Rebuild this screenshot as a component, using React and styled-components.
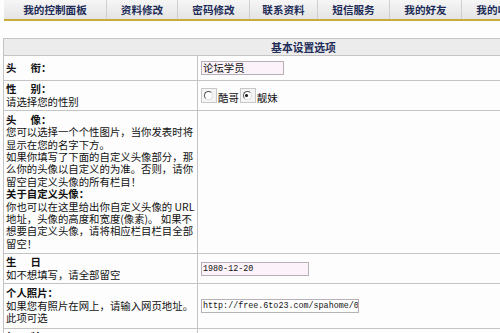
import styled, { createGlobalStyle } from "styled-components"

const GlobalStyle = createGlobalStyle`
  html, body {
    margin: 0;
    padding: 0;
    background: #fdfdfd;
    overflow: hidden;
  }
  body {
    font-family: "Noto Sans CJK SC", "DejaVu Sans", sans-serif;
    font-size: 10.4px;
    color: #111;
  }
`;

const Page = styled.div`
  width: 500px;
  height: 333px;
  overflow: hidden;
  padding-left: 3px;
`;

const TabBar = styled.div`
  display: flex;
  width: 620px;
  height: 19px;
  margin-left: 1px;
  border-bottom: 2px solid #c9aa3a;
`;

const Tab = styled.div`
  flex: 0 0 ${(p) => p.w}px;
  display: flex;
  align-items: center;
  justify-content: center;
  background: linear-gradient(#f6f6f6, #e4e4e4);
  border-right: 1px solid #cfcfcf;
  box-sizing: border-box;
  font-weight: bold;
  font-size: 10.6px;
  color: #1d2c58;
  white-space: nowrap;
  overflow: hidden;
`;

const Table = styled.table`
  margin-top: 17px;
  width: 600px;
  border-collapse: collapse;
  table-layout: fixed;
`;

const Col = styled.col`
  width: ${(p) => p.w}px;
`;

const HeadCell = styled.th`
  height: 16px;
  background: #ececec;
  border: 1px solid #c4c4c4;
  font-size: 10.8px;
  font-weight: bold;
  color: #1d2c58;
  padding: 0;
  line-height: 16px;
`;

const LabelCell = styled.td`
  border: 1px solid #c4c4c4;
  padding: 0 2px;
  height: ${(p) => p.h}px;
  vertical-align: middle;
  line-height: 12.4px;
  white-space: nowrap;
  overflow: hidden;
`;

const FieldCell = styled.td`
  border: 1px solid #c4c4c4;
  padding: 0 3px;
  vertical-align: middle;
`;

const Strong = styled.b`
  font-weight: bold;
`;

const Input = styled.div`
  box-sizing: border-box;
  width: ${(p) => p.w}px;
  height: 14px;
  border: 1px solid #b8b0b8;
  background: ${(p) => p.bg || "#fcf3fa"};
  font-family: ${(p) => (p.mono ? '"Liberation Mono", monospace' : 'inherit')};
  font-size: ${(p) => (p.mono ? "8.4px" : "10.4px")};
  line-height: 12px;
  padding-left: 1px;
  white-space: nowrap;
  overflow: hidden;
`;

const RadioGroup = styled.div`
  display: flex;
  align-items: center;
`;

const RadioBox = styled.span`
  display: inline-flex;
  align-items: flex-start;
  justify-content: flex-start;
  box-sizing: border-box;
  width: 16px;
  height: 15px;
  border: 1px solid #c8c8c8;
  background: #f4f4f4;
  padding: 2px 0 0 2px;
`;

const RadioDot = styled.span`
  position: relative;
  box-sizing: border-box;
  width: 9px;
  height: 9px;
  border-radius: 50%;
  border: 1.5px solid #555;
  border-right-color: #ddd;
  border-bottom-color: #ddd;
  background: #fff;
  &::after {
    content: "";
    display: ${(p) => (p.checked ? "block" : "none")};
    position: absolute;
    left: 1.5px;
    top: 1.5px;
    width: 3px;
    height: 3px;
    border-radius: 50%;
    background: #111;
  }
`;

const RadioLabel = styled.span`
  margin: 3px 1px 0 1px;
`;

const tabs = [
  ["我的控制面板", 103],
  ["资料修改", 71],
  ["密码修改", 72],
  ["联系资料", 68],
  ["短信服务", 72],
  ["我的好友", 72],
  ["我的收藏", 72],
];

const sp = "\u00a0\u00a0\u00a0\u00a0\u00a0\u00a0";

function App() {
  return (
    <Page>
      <GlobalStyle />
      <TabBar>
        {tabs.map(([t, w]) => (
          <Tab key={t} w={w}>{t}</Tab>
        ))}
      </TabBar>
      <Table>
        <colgroup>
          <Col w={194} />
          <Col w={406} />
        </colgroup>
        <tbody>
          <tr>
            <HeadCell colSpan={2}>基本设置选项</HeadCell>
          </tr>
          <tr>
            <LabelCell h={24}><Strong>头{sp}衔：</Strong></LabelCell>
            <FieldCell><Input w={83}>论坛学员</Input></FieldCell>
          </tr>
          <tr>
            <LabelCell h={29}>
              <Strong>性{sp}别：</Strong><br />
              请选择您的性别
            </LabelCell>
            <FieldCell>
              <RadioGroup>
                <RadioBox><RadioDot /></RadioBox>
                <RadioLabel>酷哥</RadioLabel>
                <RadioBox><RadioDot checked /></RadioBox>
                <RadioLabel>靓妹</RadioLabel>
              </RadioGroup>
            </FieldCell>
          </tr>
          <tr>
            <LabelCell h={142}>
              <Strong>头{sp}像：</Strong><br />
              您可以选择一个个性图片，当你发表时将<br />
              显示在您的名字下方。<br />
              如果你填写了下面的自定义头像部分，那<br />
              么你的头像以自定义的为准。否则，请你<br />
              留空自定义头像的所有栏目！<br />
              <Strong>关于自定义头像：</Strong><br />
              你也可以在这里给出你自定义头像的 URL<br />
              地址，头像的高度和宽度(像素)。 如果不<br />
              想要自定义头像，请将相应栏目栏目全部<br />
              留空！
            </LabelCell>
            <FieldCell />
          </tr>
          <tr>
            <LabelCell h={29}>
              <Strong>生{sp}日</Strong><br />
              如不想填写，请全部留空
            </LabelCell>
            <FieldCell><Input w={108} mono>1980-12-20</Input></FieldCell>
          </tr>
          <tr>
            <LabelCell h={44}>
              <Strong>个人照片：</Strong><br />
              如果您有照片在网上，请输入网页地址。<br />
              此项可选
            </LabelCell>
            <FieldCell>
              <Input w={158} mono bg="#fff">http://free.6to23.com/spahome/0</Input>
            </FieldCell>
          </tr>
          <tr>
            <LabelCell h={29}>
              <Strong>年{sp}龄</Strong><br />
              请输入您的年龄
            </LabelCell>
            <FieldCell />
          </tr>
        </tbody>
      </Table>
    </Page>
  )
}

export default App;
